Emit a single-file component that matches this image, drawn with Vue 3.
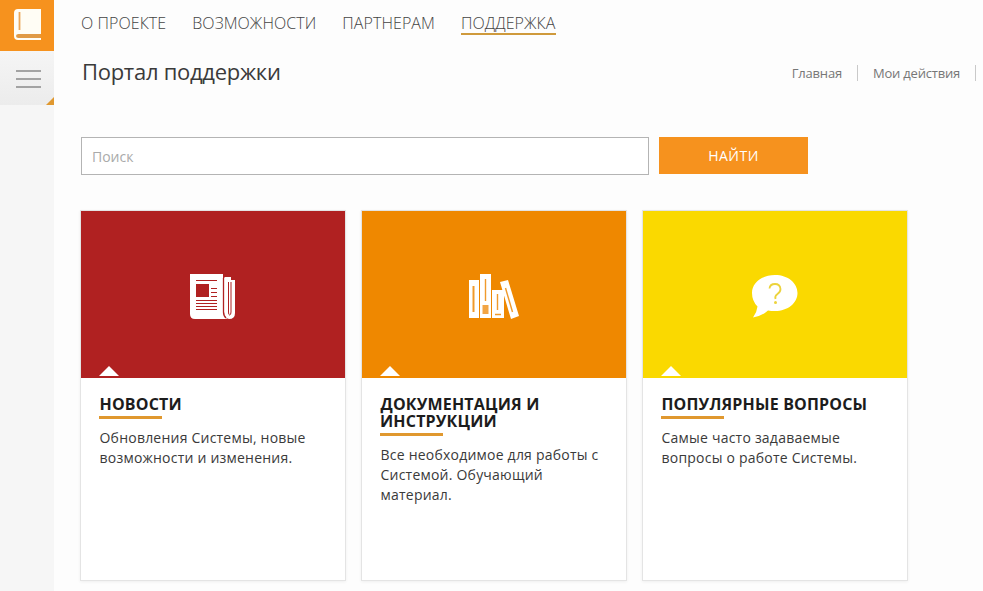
<template>
  <div class="page">
    <aside class="sidebar">
      <a class="logo" href="#" aria-label="Портал">
        <svg width="28" height="32" viewBox="0 0 28 32">
          <path d="M4 0H27V25H26V29H27V31H4Q0 31 0 27V4Q0 0 4 0Z" fill="#fffdf5" />
          <path d="M5.500 3V21" stroke="#eba75a" stroke-width="1.800" />
          <path d="M4.500 25H26.500V29H4.500Q2 29 2 27T4.500 25Z" fill="#e09a45" />
        </svg>
      </a>
      <button class="menu-button" type="button" aria-label="Меню">
        <span></span><span></span><span></span>
      </button>
    </aside>
    <main class="content">
      <nav class="top-nav">
        <a v-for="item in navItems" :key="item" href="#" :class="{ active: item === activeItem }">{{ item }}</a>
      </nav>
      <header class="heading">
        <h1>Портал поддержки</h1>
        <nav class="quick-links">
          <a v-for="link in links" :key="link" href="#">{{ link }}</a>
        </nav>
      </header>
      <form class="search" @submit.prevent>
        <input v-model.trim="query" name="query" type="text" placeholder="Поиск" />
        <button type="submit">НАЙТИ</button>
      </form>
      <section class="cards">
        <article v-for="card in cards" :key="card.id" class="card">
          <div :class="['cover', card.id]">
            <svg v-if="card.id === 'news'" width="46" height="46" viewBox="0 0 46 46">
              <path d="M0 0H33V39L37 45H5Q0 45 0 40Z" fill="#fff" />
              <path d="M35 3H41V6H45V39Q45 45 39 45Q34 44 34 38V4Z" fill="#fff" />
              <path d="M33.500 4V38Q33.500 42 36 44" fill="none" stroke="#b02121" stroke-width="1.300" />
              <path d="M38.500 8V38Q38.500 41 39.700 41T41 38V8" fill="none" stroke="#b02121" stroke-width="1" />
              <path d="M6 10H19V23H6Z" fill="#b02121" />
              <path d="M6 6.500H27M21 14.500H27M21 18.500H27M21 22.500H27M6 26.500H27M6 29.500H27M6 32.500H27M6 35.500H27" stroke="#b02121" stroke-width="1.200" />
            </svg>
            <svg v-else-if="card.id === 'docs'" width="50" height="46" viewBox="0 0 50 46">
              <path d="M0 6H10V44H0ZM11 0H22V44H11ZM23 16H35V44H23ZM31 8L39 6L50 42L42 45Z" fill="#fff" />
              <g fill="none" stroke="#f09a2c">
                <path d="M4.500 12V38" stroke-width="2" />
                <path d="M16.500 5V27" stroke-width="1.400" />
                <path d="M28.500 20V36M26 40.500H32" stroke-width="1.400" />
                <path d="M36.500 14L43.500 38" stroke-width="1.400" />
              </g>
              <path d="M13.500 31H19.500V40H13.500Z" fill="#f2a544" />
            </svg>
            <svg v-else width="48" height="46" viewBox="0 0 48 46">
              <path d="M24 1C37 1 46.500 9 46.500 19S37 37 24 37Q20 37 17 36.500Q11 42 2 43.500Q6 38 6.500 32.500Q1 27 1 19C1 9 11 1 24 1Z" fill="#fff" />
              <path d="M18.500 14.500Q19 10 24 10T29.500 15Q29.500 18 26.500 20T24.500 25" fill="none" stroke="#ecd33c" stroke-width="1.800" />
              <circle cx="24.500" cy="28.500" r="1.500" fill="#ecd33c" />
            </svg>
            <i class="pointer"></i>
          </div>
          <div class="card-body">
            <h2>{{ card.title }}</h2>
            <p>{{ card.text }}</p>
          </div>
        </article>
      </section>
    </main>
  </div>
</template>

<script setup>
import { ref } from 'vue';

const query = ref('');
const activeItem = ref('ПОДДЕРЖКА');
const navItems = ['О ПРОЕКТЕ', 'ВОЗМОЖНОСТИ', 'ПАРТНЕРАМ', 'ПОДДЕРЖКА'];
const links = ['Главная', 'Мои действия'];
const cards = [
  { id: 'news', title: 'НОВОСТИ', text: 'Обновления Системы, новые возможности и изменения.' },
  { id: 'docs', title: 'ДОКУМЕНТАЦИЯ И ИНСТРУКЦИИ', text: 'Все необходимое для работы с Системой. Обучающий материал.' },
  { id: 'faq', title: 'ПОПУЛЯРНЫЕ ВОПРОСЫ', text: 'Самые часто задаваемые вопросы о работе Системы.' }
];
</script>

<style>
body { background: #fdfdfd; overflow: hidden; }
</style>

<style scoped>
.page { display: flex; height: 591px; overflow: hidden; box-sizing: border-box; font-family: "Open Sans", "Noto Sans", sans-serif; color: #3a3a3a; }
.page * { box-sizing: border-box; }
a { color: inherit; text-decoration: none; }
.sidebar { flex: 0 0 54px; background: #f6f6f6; }
.logo { display: flex; height: 51px; padding: 9px 0 0 14px; background: #f6921e; }
.menu-button { position: relative; display: flex; flex-direction: column; gap: 6px; width: 54px; height: 54px; padding: 19px 0 0 16px; border: 0; background: linear-gradient(#f5f5f5, #ececec); }
.menu-button span { width: 25px; height: 2px; background: #a3a3a3; }
.menu-button::after { content: ""; position: absolute; right: 0; bottom: 0; border-left: 8px solid transparent; border-bottom: 8px solid #e0982f; }
.content { flex: 1; min-width: 0; padding: 13px 7px 0 27px; }
.top-nav { display: flex; gap: 26px; height: 22px; font-size: 16px; font-weight: 300; line-height: 20px; letter-spacing: .07px; color: #444; }
.top-nav a { height: 22px; white-space: nowrap; }
.top-nav .active { border-bottom: 2px solid #cf9a3c; }
.heading { display: flex; justify-content: space-between; align-items: center; height: 36px; margin-top: 20px; }
.heading h1 { margin: 0 0 4px 1px; font-size: 22px; font-weight: 400; line-height: 30px; letter-spacing: -.28px; }
.quick-links { display: flex; font-size: 13px; line-height: 16px; letter-spacing: -.2px; color: #777; }
.quick-links a { padding: 0 15px; border-right: 1px solid #c9c9c9; white-space: nowrap; }
.search { display: flex; gap: 10px; margin-top: 46px; }
.search input { width: 568px; height: 38px; border: 1px solid #b4b4b4; border-radius: 0; background: #fff; padding: 0 10px; font: 14px "Open Sans", sans-serif; color: #444; outline: 0; }
.search input::placeholder { color: #aaa; }
.search button { width: 149px; height: 37px; border: 0; background: #f6921e; color: #fff; padding: 0; font: 14px "Open Sans", sans-serif; letter-spacing: .5px; }
.cards { display: flex; gap: 15px; margin: 35px 0 0 -1px; }
.card { flex: 0 0 266px; height: 371px; border: 1px solid #e4e4e4; background: #fff; box-shadow: 0 1px 3px rgba(0, 0, 0, .06); }
.cover { position: relative; display: flex; align-items: center; justify-content: center; height: 167px; padding-top: 5px; }
.news { background: #b02121; }
.docs { background: #ef8800; }
.faq { background: #fad900; }
.pointer { position: absolute; left: 18px; bottom: 2px; border: 10px solid transparent; border-top: 0; border-bottom-color: #fff; }
.card-body { padding: 18px 18px 0; }
.card h2 { margin: 0; font-size: 16px; font-weight: 700; line-height: 17px; letter-spacing: .18px; text-indent: .5px; color: #1c1c1c; }
.card h2::after { content: ""; display: block; width: 63px; height: 3px; margin-top: 3px; background: #e0982f; }
.card p { margin: 9px 0 0; padding-left: .5px; font-size: 14px; line-height: 20px; letter-spacing: .22px; }
</style>
